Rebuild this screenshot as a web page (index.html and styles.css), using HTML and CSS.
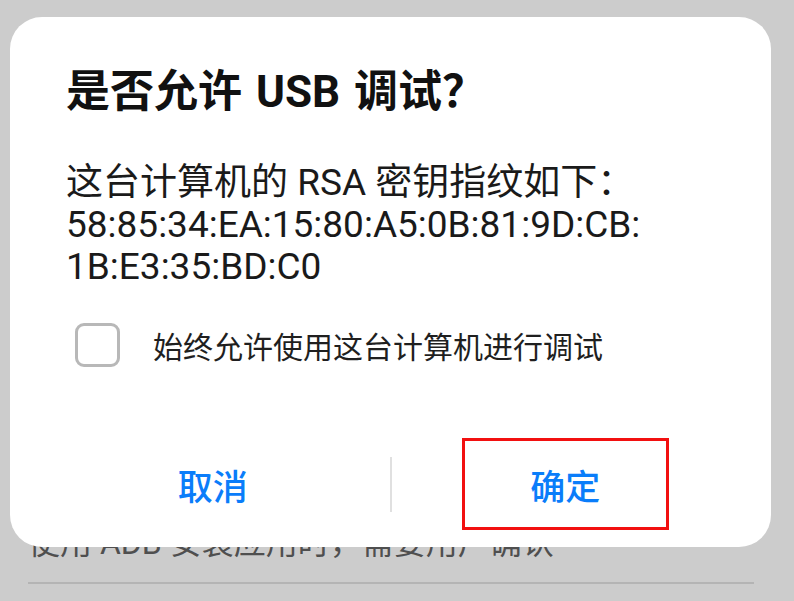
FILE: index.html
```html
<!DOCTYPE html>
<html>
<head>
  <title>USB Debugging</title>
  <link rel="stylesheet" href="styles.css">
</head>
<body>
  <div id="page">
    <div class="setting-row">使用 ADB 安装应用时，需要用户确认</div>
  </div>

  <div id="dialog">
    <h1 class="dialog-title">是否允许 USB 调试？</h1>
    <p class="dialog-text">这台计算机的 RSA 密钥指纹如下：<br>58:85:34:EA:15:80:A5:0B:81:9D:CB:<br>1B:E3:35:BD:C0</p>
    <label class="check-row">
      <span class="check-box"></span>
      <span class="check-label">始终允许使用这台计算机进行调试</span>
    </label>
    <div class="button-row">
      <div class="dialog-button"><span class="button-label">取消</span></div>
      <div class="button-divider"></div>
      <div class="dialog-button"><span class="button-label highlight">确定</span></div>
    </div>
  </div>
</body>
</html>
```

FILE: styles.css
```css
body {
  margin: 0;
  width: 794px;
  height: 601px;
  overflow: hidden;
  background-color: #cccccc;
  font-family: Roboto, "Noto Sans CJK SC", sans-serif;
  position: relative;
}
#page {
  padding: 523px 40px 0 28px;
}
.setting-row {
  font-size: 32px;
  line-height: 40px;
  color: #4f4f4f;
  padding-bottom: 19px;
  border-bottom: 2px solid #b4b4b4;
}
#dialog {
  position: absolute;
  top: 17px;
  left: 10px;
  width: 761px;
  height: 530px;
  box-sizing: border-box;
  padding: 47px 56px 17px;
  background-color: #ffffff;
  border-radius: 32px;
  display: flex;
  flex-direction: column;
}
.dialog-title {
  margin: 0;
  font-size: 44px;
  line-height: 56px;
  font-weight: bold;
  color: #111111;
  word-spacing: 3px;
}
.dialog-text {
  margin: 42px 0 0;
  font-size: 37px;
  line-height: 42px;
  color: #1a1a1a;
}
.check-row {
  display: flex;
  align-items: center;
  gap: 33px;
  margin: 35px 0 0 9px;
}
.check-box {
  width: 45px;
  height: 44px;
  box-sizing: border-box;
  border: 3px solid #b8b8b8;
  border-radius: 9px;
}
.check-label {
  font-size: 30px;
  color: #1f1f1f;
}
.button-row {
  margin: auto -30px 0;
  display: flex;
  align-items: center;
  height: 92px;
}
.dialog-button {
  flex: 1;
  display: flex;
  justify-content: center;
}
.button-divider {
  width: 2px;
  height: 55px;
  background-color: #e0e0e0;
}
.button-label {
  width: 207px;
  height: 92px;
  box-sizing: border-box;
  display: flex;
  align-items: center;
  justify-content: center;
  font-size: 35px;
  font-weight: 500;
  color: #0a7dfa;
}
.highlight {
  margin-left: -6px;
  border: 3px solid #f21010;
}
```
